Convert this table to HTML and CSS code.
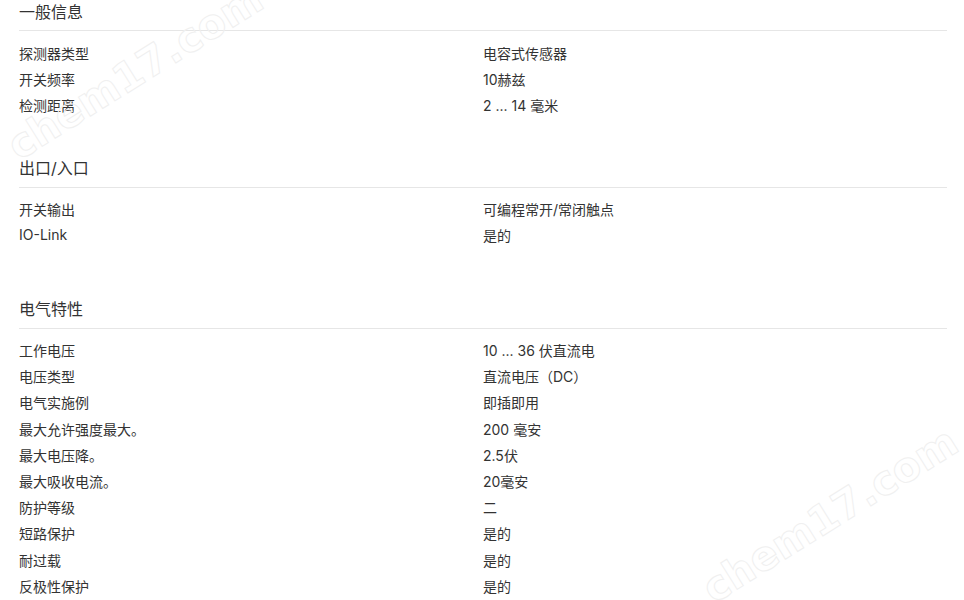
FILE: index.html
```html
<!DOCTYPE html>
<html lang="zh">
<head>
    <meta charset="UTF-8">
    <meta name="viewport" content="width=device-width, initial-scale=1.0">
    <title>技术参数</title>
    <link rel="stylesheet" href="styles.css">
</head>
<body>
    <div class="specs">
        <section class="spec-group">
            <h2 class="spec-title">一般信息</h2>
            <div class="spec-row"><span>探测器类型</span><span>电容式传感器</span></div>
            <div class="spec-row"><span>开关频率</span><span>10赫兹</span></div>
            <div class="spec-row"><span>检测距离</span><span>2 ... 14 毫米</span></div>
        </section>

        <section class="spec-group spec-group-wide">
            <h2 class="spec-title">出口/入口</h2>
            <div class="spec-row"><span>开关输出</span><span>可编程常开/常闭触点</span></div>
            <div class="spec-row"><span>IO-Link</span><span>是的</span></div>
        </section>

        <section class="spec-group">
            <h2 class="spec-title">电气特性</h2>
            <div class="spec-row"><span>工作电压</span><span>10 ... 36 伏直流电</span></div>
            <div class="spec-row"><span>电压类型</span><span>直流电压（DC）</span></div>
            <div class="spec-row"><span>电气实施例</span><span>即插即用</span></div>
            <div class="spec-row"><span>最大允许强度最大。</span><span>200 毫安</span></div>
            <div class="spec-row"><span>最大电压降。</span><span>2.5伏</span></div>
            <div class="spec-row"><span>最大吸收电流。</span><span>20毫安</span></div>
            <div class="spec-row"><span>防护等级</span><span>二</span></div>
            <div class="spec-row"><span>短路保护</span><span>是的</span></div>
            <div class="spec-row"><span>耐过载</span><span>是的</span></div>
            <div class="spec-row"><span>反极性保护</span><span>是的</span></div>
        </section>
    </div>

    <div class="watermark watermark-top">chem17.com</div>
    <div class="watermark watermark-bottom">chem17.com</div>
</body>
</html>
```

FILE: styles.css
```css
* {
    margin: 0;
    padding: 0;
    box-sizing: border-box;
}

html, body {
    height: 100%;
    overflow: hidden;
}

body {
    font-family: Inter, "Noto Sans CJK SC", sans-serif;
    background-color: #fff;
    color: #333;
    padding: 0 17px 0 19px;
    position: relative;
}

.spec-group {
    margin-bottom: 37px;
}

.spec-group-wide {
    margin-bottom: 49px;
}

.spec-title {
    font-size: 16px;
    font-weight: normal;
    line-height: 24px;
    padding-bottom: 6px;
    border-bottom: 1px solid #e6e6e6;
    margin-bottom: 9px;
    color: #333;
}

.spec-group + .spec-group .spec-title {
    padding-bottom: 7px;
    margin-bottom: 8px;
}

.spec-row {
    display: grid;
    grid-template-columns: 1fr 1fr;
    height: 26.2px;
    align-items: center;
    font-size: 14px;
}

.watermark {
    position: absolute;
    font-family: "DejaVu Sans", sans-serif;
    font-weight: bold;
    font-size: 41px;
    color: transparent;
    -webkit-text-stroke: 1px #f0f0f0;
    transform: translate(-50%, -50%) rotate(-32deg);
    pointer-events: none;
    white-space: nowrap;
}

.watermark-top {
    left: 135px;
    top: 72px;
}

.watermark-bottom {
    left: 830px;
    top: 515px;
}
```
